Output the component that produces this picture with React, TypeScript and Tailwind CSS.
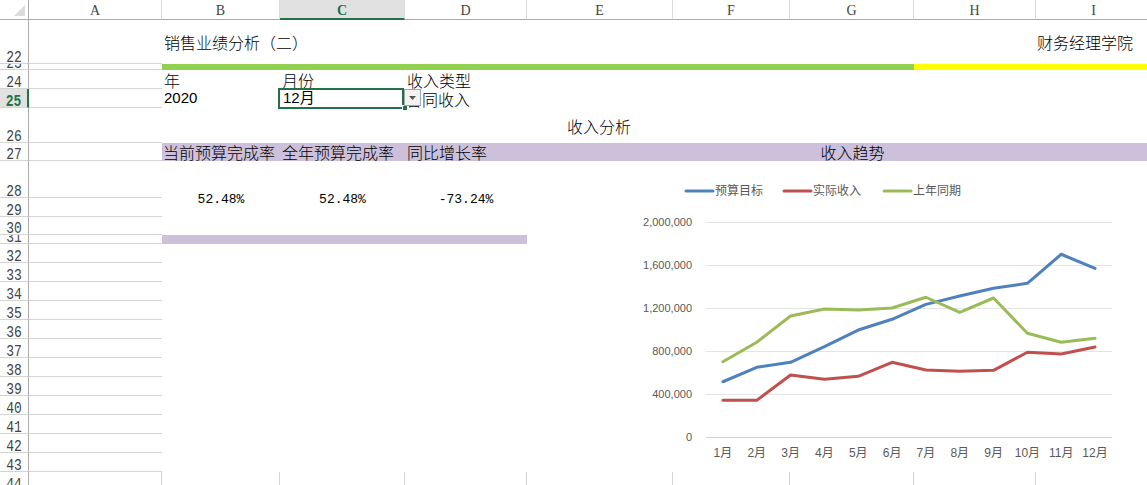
import React from "react";

// 月度数据（千元）
const months = ["1月", "2月", "3月", "4月", "5月", "6月", "7月", "8月", "9月", "10月", "11月", "12月"];
const budget = [514, 648, 695, 840, 995, 1095, 1234, 1312, 1383, 1430, 1700, 1569];
const actual = [341, 341, 577, 537, 565, 695, 623, 611, 620, 788, 772, 837];
const lastYear = [700, 881, 1126, 1191, 1181, 1200, 1300, 1160, 1293, 965, 881, 918];

const series = [
  { name: "预算目标", color: "#4f81bd", data: budget, lx: 159 },
  { name: "实际收入", color: "#c0504d", data: actual, lx: 257 },
  { name: "上年同期", color: "#9bbb59", data: lastYear, lx: 357 },
];

const px = (i: number) => 179 + 33.83 * (i + 0.5);
const py = (v: number) => 276 - v * 0.1075;

const colHeads = [
  { label: "", corner: true },
  { label: "A" },
  { label: "B" },
  { label: "C", selected: true },
  { label: "D" },
  { label: "E" },
  { label: "F" },
  { label: "G" },
  { label: "H" },
  { label: "I" },
];

const rowNums = [
  "22", "23", "24", "25", "26", "27", "28", "29", "30", "31", "32", "33",
  "34", "35", "36", "37", "38", "39", "40", "41", "42", "43", "44",
];

const lastRowCells = [
  "col-start-3",
  "col-start-4",
  "col-start-5",
  "col-start-6",
  "col-start-7",
  "col-start-8",
  "col-start-9",
  "col-start-10",
];

const cjk = "font-['Noto_Sans_CJK_SC',sans-serif]";
const mono = "font-['Liberation_Mono',monospace]";

const TrendChart = () => (
  <svg width="625" height="311" className="overflow-visible" fontFamily="'Liberation Sans','Noto Sans CJK SC',sans-serif">
    {/* 图例 */}
    {series.map((s) => (
      <g key={s.name}>
        <line x1={s.lx} y1={30} x2={s.lx + 27} y2={30} stroke={s.color} strokeWidth={3} strokeLinecap="round" />
        <text x={s.lx + 29} y={30} fontSize={12} fill="#595959" dominantBaseline="central">
          {s.name}
        </text>
      </g>
    ))}

    {/* 网格线与纵轴 */}
    {[0, 400, 800, 1200, 1600, 2000].map((v) => (
      <g key={v}>
        <line x1={179} y1={py(v) + 0.5} x2={585} y2={py(v) + 0.5} stroke={v === 0 ? "#d0d0d0" : "#e4e4e4"} strokeWidth={1} />
        <text x={165} y={py(v)} fontSize={11} fill="#595959" textAnchor="end" dominantBaseline="central">
          {v === 0 ? "0" : (v * 1000).toLocaleString("en-US")}
        </text>
      </g>
    ))}

    {months.map((m, i) => (
      <text key={m} x={px(i)} y={292} fontSize={12} fill="#595959" textAnchor="middle" dominantBaseline="central">
        {m}
      </text>
    ))}

    {series.map((s) => (
      <polyline
        key={s.name}
        points={s.data.map((v, i) => `${px(i)},${py(v)}`).join(" ")}
        fill="none"
        stroke={s.color}
        strokeWidth={3}
        strokeLinejoin="round"
        strokeLinecap="round"
      />
    ))}
  </svg>
);

export default function App() {
  return (
    <div className="w-[1147px] h-[485px] overflow-hidden bg-white">
      <div
        className={`grid w-[1152px] grid-cols-[29px_133px_118px_125px_122px_146px_117px_124px_122px_116px] grid-rows-[20px_44px_6px_19px_19px_35px_18px_37px_19px_18px_9px_repeat(13,19px)] text-black ${cjk}`}
      >
        {/* 列标题 */}
        {colHeads.map((c, idx) =>
          c.corner ? (
            <div key={idx} className="row-start-1 relative border-b border-r border-b-[#ababab] border-r-[#ababab] bg-white">
              <svg className="absolute left-[14px] top-[5px]" width="12" height="12">
                <polygon points="11,0 11,11 0,11" fill="#dcdcdc" />
              </svg>
            </div>
          ) : (
            <div
              key={idx}
              className={`row-start-1 flex items-center justify-center border-r border-r-[#dadada] font-['Liberation_Serif',serif] text-[14px] ${
                c.selected
                  ? "bg-[#e1e1e1] border-b-2 border-b-[#217346] text-[#217346] font-bold"
                  : "bg-white border-b border-b-[#ababab] text-[#444]"
              }`}
            >
              <span className="pt-[2px]">{c.label}</span>
            </div>
          )
        )}

        {/* 行号与 A 列 */}
        {rowNums.map((n) => (
          <React.Fragment key={n}>
            <div
              className={`col-start-1 flex items-end justify-center overflow-hidden border-b border-b-[#d4d4d4] ${
                n === "25"
                  ? "bg-[#e1e1e1] border-r-2 border-r-[#217346] text-[#217346] font-bold"
                  : "bg-white border-r border-r-[#ababab] text-[#444]"
              }`}
            >
              <span className={`inline-block origin-bottom scale-y-[1.3] translate-y-[3px] leading-none ${mono} text-[13px]`}>{n}</span>
            </div>
            <div className={`col-start-2 border-b border-b-[#d4d4d4] ${n === "44" ? "border-r border-r-[#d4d4d4]" : ""}`} />
          </React.Fragment>
        ))}

        {/* 第 22 行 */}
        <div className="row-start-2 col-start-3 col-span-4 flex items-center pl-[2px] text-[16px] font-light whitespace-nowrap">
          销售业绩分析（二）
        </div>
        <div className="row-start-2 col-start-10 flex items-center pl-[1px] text-[16px] font-light whitespace-nowrap">
          财务经理学院
        </div>

        {/* 第 23 行色条 */}
        <div className="row-start-3 col-start-3 col-span-6 bg-[#92d050]" />
        <div className="row-start-3 col-start-9 col-span-2 bg-[#ffff00]" />

        {/* 第 24 行 */}
        <div className="row-start-4 col-start-3 flex items-end pl-[2px] text-[16px] leading-[17px] font-light">年</div>
        <div className="row-start-4 col-start-4 flex items-end pl-[2px] text-[16px] leading-[17px] font-light">月份</div>
        <div className="row-start-4 col-start-5 flex items-end pl-[2px] text-[16px] leading-[17px] font-light whitespace-nowrap">
          收入类型
        </div>

        {/* 第 25 行 */}
        <div className="row-start-5 col-start-3 flex items-center pl-[2px] text-[15px] font-['Liberation_Sans',sans-serif]">2020</div>
        <div className="row-start-5 col-start-4 relative flex items-center pl-[3px] text-[15px] font-['Liberation_Sans','Noto_Sans_CJK_SC',sans-serif]">
          12月
          <div className="absolute -left-[2px] -top-[1px] right-[1px] -bottom-[1px] border-2 border-[#217346]" />
          <div className="absolute right-[-3px] bottom-[-3px] w-[6px] h-[6px] bg-[#217346] border border-white" />
          <div className="absolute left-[124px] top-0 z-10 w-[17px] h-[17px] flex items-center justify-center border border-[#a6a6a6] bg-[#f3f3f3]">
            <svg width="7" height="4">
              <polygon points="0,0 7,0 3.5,4" fill="#555" />
            </svg>
          </div>
        </div>
        <div className="row-start-5 col-start-5 flex items-center pl-[1px] text-[16px] font-light whitespace-nowrap">合同收入</div>

        {/* 第 26 行 */}
        <div className="row-start-6 col-start-3 col-span-7 flex items-center justify-center text-[16px] font-light">收入分析</div>

        {/* 第 27 行 */}
        <div className="row-start-7 col-start-3 flex items-center pl-[1px] bg-[#ccc0da] text-[16px] font-light whitespace-nowrap">
          当前预算完成率
        </div>
        <div className="row-start-7 col-start-4 flex items-center pl-[2px] bg-[#ccc0da] text-[16px] font-light whitespace-nowrap">
          全年预算完成率
        </div>
        <div className="row-start-7 col-start-5 flex items-center pl-[2px] bg-[#ccc0da] text-[16px] font-light whitespace-nowrap">
          同比增长率
        </div>
        <div className="row-start-7 col-start-6 col-span-5 flex items-center justify-center pl-[26px] bg-[#ccc0da] text-[16px] font-light">
          收入趋势
        </div>

        {/* 指标 */}
        <div className={`row-start-8 row-span-3 col-start-3 flex items-center justify-center pt-[3px] ${mono} text-[13px]`}>52.48%</div>
        <div className={`row-start-8 row-span-3 col-start-4 flex items-center justify-center pt-[3px] ${mono} text-[13px]`}>52.48%</div>
        <div className={`row-start-8 row-span-3 col-start-5 flex items-center justify-center pt-[3px] ${mono} text-[13px]`}>-73.24%</div>

        {/* 第 31 行 */}
        <div className="row-start-11 col-start-3 col-span-3 bg-[#ccc0da]" />

        {/* 图表 */}
        <div className="row-start-8 row-span-16 col-start-6 col-span-5">
          <TrendChart />
        </div>

        {/* 第 44 行网格 */}
        {lastRowCells.map((c) => (
          <div key={c} className={`row-start-24 ${c} border-r border-r-[#d4d4d4]`} />
        ))}
      </div>
    </div>
  );
}
